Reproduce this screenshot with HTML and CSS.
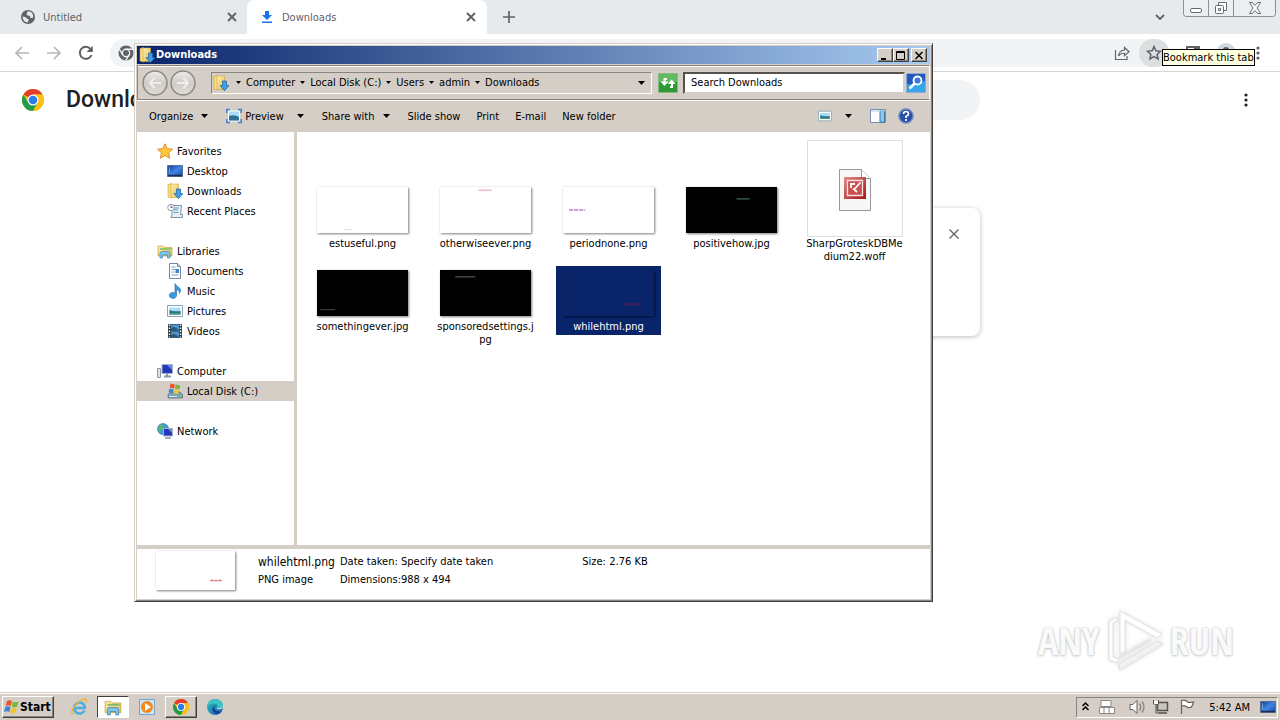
FILE: index.html
```html
<!DOCTYPE html>
<html lang="en">
<head>
<meta charset="utf-8">
<title>Downloads</title>
<link rel="stylesheet" href="styles.css">
</head>
<body>
<svg class="defs" aria-hidden="true">
  <defs>
    <linearGradient id="gFolder" x1="0" y1="0" x2="1" y2="1"><stop offset="0" stop-color="#fff3b0"/><stop offset="1" stop-color="#e3b94f"/></linearGradient>
    <linearGradient id="gScreen" x1="0" y1="0" x2="1" y2="1"><stop offset="0" stop-color="#12358f"/><stop offset=".5" stop-color="#3f86e0"/><stop offset="1" stop-color="#1a48a8"/></linearGradient>
    <linearGradient id="gDisc" x1="0" y1="0" x2="0" y2="1"><stop offset="0" stop-color="#eeece9"/><stop offset=".5" stop-color="#cfccc7"/><stop offset="1" stop-color="#e0ddd9"/></linearGradient>
    <linearGradient id="gEdge" x1="0" y1="0" x2="1" y2="1"><stop offset="0" stop-color="#35c1b5"/><stop offset="1" stop-color="#0b5cb8"/></linearGradient>
    <linearGradient id="gRed" x1="0" y1="0" x2="1" y2="1"><stop offset="0" stop-color="#e08a86"/><stop offset="1" stop-color="#a31616"/></linearGradient>
    <symbol id="chrome" viewBox="0 0 24 24">
      <circle cx="12" cy="12" r="12" fill="#fbc116"/>
      <path d="M12 12 1.600 6A12 12 0 0 1 22.400 6H12z" fill="#e33b2e"/>
      <path d="M1.600 6A12 12 0 0 0 12 24l5.200-9L12 12 6.800 15z" fill="#229a4b"/>
      <path d="M22.400 6A12 12 0 0 1 12 24l5.200-9A6 6 0 0 0 12 6z" fill="#fbc116"/>
      <circle cx="12" cy="12" r="6" fill="#fff"/><circle cx="12" cy="12" r="4.700" fill="#2b7de9"/>
    </symbol>
    <symbol id="dlfolder" viewBox="0 0 16 16">
      <path d="M1 1.500 4.500.5V15L1 14z" fill="#f5dc85" stroke="#c9a23d" stroke-width=".6"/>
      <path d="M4 1h7.500v13.500H4z" fill="url(#gFolder)" stroke="#d0a845" stroke-width=".6"/>
      <path d="M9.500 6h4v4.500h2.500L11.500 15.700 7 10.500h2.500z" fill="#3f9fe6" stroke="#1b62a5" stroke-width=".7"/>
    </symbol>
    <symbol id="lib" viewBox="0 0 16 16">
      <path d="M1 3h5l1.500 1.500H15V13H1z" fill="url(#gFolder)" stroke="#c9a23d" stroke-width=".7"/>
      <path d="M3 6h11" stroke="#79b86b" stroke-width="1.500"/>
      <path d="M3 15v-4.500q0-2 2-2h6q2 0 2 2V15h-2.500v-3h-5v3z" fill="#7cc6ea" stroke="#3b86b5" stroke-width=".7"/>
    </symbol>
    <symbol id="screen" viewBox="0 0 16 16"><path d="M.5 2.500h15v11H.5z" fill="url(#gScreen)" stroke="#5b6f93"/><path d="M1 12.500h14" stroke="#1e2e57" stroke-width="1.500"/><path d="M2 5h1M2 7h1M2 9h1" stroke="#b9dcff"/></symbol>
    <symbol id="pic" viewBox="0 0 16 16"><path d="M.5 2.500h15v11H.5z" fill="#fff" stroke="#8fa3b5"/><path d="M2.500 4.500h11v7h-11z" fill="#a8dcf5"/><path d="M2.500 7q4 2 11 1v3.500h-11z" fill="#2d7290"/><path d="M2.500 10h11v1.500h-11z" fill="#4f9b79"/></symbol>
    <symbol id="flag" viewBox="0 0 16 16">
      <path d="M3 2q2.500-1.500 5 0L6.800 7Q4.500 5.700 1.700 7z" fill="#e8562a"/><path d="M9 2.500q2.500 1.300 5.500 0l-1.300 5Q10.500 8.800 7.800 7.400z" fill="#79b83a"/>
      <path d="M1.400 8q2.800-1.300 5.100 0l-1.200 5Q3 11.700.1 13z" fill="#3b86d6"/><path d="M7.500 8.500q2.700 1.300 5.400 0l-1.300 5q-2.500 1.300-5.400-.1z" fill="#f5c32c"/>
    </symbol>
    <symbol id="x" viewBox="0 0 10 10"><path d="m1 1 8 8M9 1 1 9" stroke="currentColor" stroke-width="1.900" fill="none"/></symbol>
    <symbol id="caret" viewBox="0 0 7 4"><path d="M0 0h7L3.500 4z" fill="#000"/></symbol>
    <symbol id="dots" viewBox="0 0 4 14"><circle cx="2" cy="2" r="1.600"/><circle cx="2" cy="7" r="1.600"/><circle cx="2" cy="12" r="1.600"/></symbol>
  </defs>
</svg>

<div class="desktop">
  <main class="browser">
    <header class="tabstrip">
      <div class="tab">
        <svg class="i14" viewBox="0 0 14 14"><circle cx="7" cy="7" r="7" fill="#5f6368"/><path d="M1.500 6.500q3 0 4 1.500t2 1-1 3.500Q2 12 1.500 6.500zM6 1.500q1 1.500-.5 2.500 0 1.500 2 1.500T9.500 8q2 0 2.700-.5Q12.500 2.500 8.500 1.500z" fill="#e7eaed"/></svg>
        <span class="tab-title">Untitled</span>
        <button class="plain" aria-label="Close Untitled"><svg class="i10"><use href="#x"/></svg></button>
      </div>
      <div class="tab active">
        <svg class="i14" viewBox="0 0 14 14"><path d="M5 1h4v4h3L7 10 2 5h3zM2 11.500h10V13H2z" fill="#1a73e8"/></svg>
        <span class="tab-title">Downloads</span>
        <button class="plain" aria-label="Close Downloads"><svg class="i10"><use href="#x"/></svg></button>
      </div>
      <button class="plain newtab" aria-label="New tab"><svg class="i12" viewBox="0 0 12 12"><path d="M6 0v12M0 6h12" stroke="currentColor" stroke-width="1.700"/></svg></button>
      <span class="grow"></span>
      <button class="plain tabsearch" aria-label="Search tabs"><svg class="i10" viewBox="0 0 10 10"><path d="m1 3 4 4 4-4" fill="none" stroke="currentColor" stroke-width="1.900"/></svg></button>
      <div class="winctl">
        <button aria-label="Minimize"><svg viewBox="0 0 14 12"><rect x="1.500" y="6.500" width="11" height="4" rx="1.500" fill="#fff" stroke="#666b73"/></svg></button>
        <button aria-label="Restore"><svg viewBox="0 0 14 12"><path d="M4.500.5h8v8h-3M4.500.5v3" fill="#fff" stroke="#666b73"/><rect x="1.500" y="3.500" width="8" height="8" rx="1" fill="#fff" stroke="#666b73"/><path d="M4.500 6.500h2v2h-2z" fill="none" stroke="#666b73"/></svg></button>
        <button class="wide" aria-label="Close"><svg viewBox="0 0 14 12"><path d="M1.500.5h3L7 3.500 9.500.5h3L9 6l3.500 5.500h-3L7 8.500l-2.500 3h-3L5 6z" fill="#fff" stroke="#666b73"/></svg></button>
      </div>
    </header>
    <div class="toolbar">
      <button class="plain off" aria-label="Back"><svg class="i16" viewBox="0 0 16 16"><path d="M15 8H2M8 2 2 8l6 6" fill="none" stroke="currentColor" stroke-width="1.700"/></svg></button>
      <button class="plain off" aria-label="Forward"><svg class="i16" viewBox="0 0 16 16"><path d="M1 8h13M8 2l6 6-6 6" fill="none" stroke="currentColor" stroke-width="1.700"/></svg></button>
      <button class="plain" aria-label="Reload"><svg class="i16" viewBox="0 0 16 16"><path d="M13.500 10A6 6 0 1 1 12.500 4" fill="none" stroke="currentColor" stroke-width="2"/><path d="M14.800.8V7H8.600z" fill="currentColor"/></svg></button>
      <div class="omnibox">
        <svg class="i16" viewBox="0 0 16 16"><circle cx="8" cy="8" r="7.500" fill="#5f6368"/><circle cx="8" cy="8" r="3.700" fill="#5f6368" stroke="#f1f3f4" stroke-width="1.400"/><path d="M8 4.300h7M4.800 9.900 1.300 4M11.200 9.900 7.700 15.500" stroke="#f1f3f4" stroke-width="1.400"/></svg>
        <span class="grow"></span>
        <button class="plain" aria-label="Share"><svg class="i16" viewBox="0 0 16 16"><path d="M1.500 5v9.500h11.500V11M4.500 11q.5-5.500 6-6V2.500L15 6.700l-4.500 4V8.300Q6.500 8 4.500 11z" fill="none" stroke="currentColor" stroke-width="1.200"/></svg></button>
        <button class="plain star" aria-label="Bookmark this tab"><svg class="i16" viewBox="0 0 16 16"><path d="m8 1.500 1.900 4.300 4.700.5-3.500 3.100 1 4.600L8 11.600 3.900 14l1-4.600L1.400 6.300l4.700-.5z" fill="none" stroke="currentColor" stroke-width="1.500"/></svg></button>
      </div>
      <button class="plain" aria-label="Side panel"><svg class="i14" viewBox="0 0 14 14"><path d="M1 1h12v11H1z" fill="none" stroke="currentColor" stroke-width="2"/><path d="M8 1h5v11H8z" fill="currentColor"/></svg></button>
      <button class="plain avatar" aria-label="Profile"><svg class="i14" viewBox="0 0 14 14"><circle cx="7" cy="4" r="3" fill="#5f6368"/><path d="M1 13q0-5 6-5t6 5z" fill="#5f6368"/></svg></button>
      <button class="plain menu" aria-label="Menu"><svg class="dots"><use href="#dots"/></svg></button>
    </div>
    <section class="page">
      <div class="page-head">
        <svg class="i22"><use href="#chrome"/></svg>
        <h1>Downloads</h1>
        <div class="page-search"></div>
        <button class="plain dark" aria-label="More actions"><svg class="dots"><use href="#dots"/></svg></button>
      </div>
      <article class="card"><button class="plain" aria-label="Remove from list"><svg class="i10" viewBox="0 0 10 10"><path d="m.5.5 9 9M9.500.5l-9 9" stroke="currentColor" stroke-width="1.300"/></svg></button></article>
    </section>
  </main>

  <footer class="taskbar">
    <button class="start raised"><svg class="i18"><use href="#flag"/></svg>Start</button>
    <div class="quick">
      <button class="task" aria-label="Internet Explorer"><svg class="i18" viewBox="0 0 18 18"><path d="M14.500 12.500a5.500 5.500 0 1 1 .2-4.500v2H5" fill="none" stroke="#49aee6" stroke-width="2.600"/><path d="M3 16q-3-1 1-7 5-7 10-8 4 0 2 4" fill="none" stroke="#e8b93b" stroke-width="1.400"/></svg></button>
      <button class="task pressed" aria-label="Explorer"><svg class="i18"><use href="#lib"/></svg></button>
      <button class="task" aria-label="Media Player"><svg class="i18" viewBox="0 0 18 18"><path d="M1.500 1.500h15v15h-15z" fill="#cde7f8" stroke="#6fa5cf"/><circle cx="9" cy="9" r="6" fill="#f28a1d"/><path d="m7 5 6 4-6 4z" fill="#fff"/></svg></button>
      <button class="task raised" aria-label="Chrome"><svg class="i16"><use href="#chrome"/></svg></button>
      <button class="task" aria-label="Edge"><svg class="i16" viewBox="0 0 16 16"><circle cx="8" cy="8" r="8" fill="url(#gEdge)"/><path d="M0 7.500Q1 .5 8 0q7.500.5 8 6.500 0 4-5.500 3.500Q12 5 7 4.500 2 4.500 0 7.500z" fill="#3cc4c4"/><path d="M8.500 7q-2 .5-1 3 1.500 3 5.500 2.500l2-.5q-2 3-5.500 3Q4.500 13.500 5.500 9 6.500 6.500 8.500 7z" fill="#1b3f93"/><path d="M9 7q1.500 1 .8 3l3 .3q3-.5 3.200-3L14 9l-3.300 0z" fill="#d4cec6"/></svg></button>
    </div>
    <span class="grow"></span>
    <div class="tray">
      <svg class="i9" viewBox="0 0 9 12"><path d="m1.500 5 3-3 3 3M1.500 9l3-3 3 3" fill="none" stroke="#000" stroke-width="1.500"/></svg>
      <svg class="i18" viewBox="0 0 18 18"><path d="M3 2.500h10v6H3zM1.500 9.500h15v6h-15zM6 9v6M11 9v6" fill="#fff" stroke="#8b8782"/></svg>
      <svg class="i18 sound" viewBox="0 0 18 18"><path d="M2 6.500h3l4-4v13l-4-4H2z" fill="#fff" stroke="#67635f"/><path d="M11.500 5.500q2.500 3.500 0 7M14 3.500q4 5.500 0 11" fill="none" stroke="#85817c" stroke-width="1.300"/></svg>
      <svg class="i18" viewBox="0 0 18 18"><path d="M5.500 4.500h10v8h-10z" fill="#c9c5bf" stroke="#55514d" stroke-width="1.500"/><path d="M7 15h8" stroke="#55514d" stroke-width="1.500"/><path d="M1.500 2v4h5V2M4 6v9h4" fill="none" stroke="#55514d"/><path d="M2 3h4v3H2z" fill="#fff"/></svg>
      <svg class="i18" viewBox="0 0 18 18"><path d="M3.500 16V2.500q4-1 6 1.500 2.500 1 6 0-1 4-2.500 5.500-3 .5-5-1-2-1.500-4-.5" fill="#fff" stroke="#67635f" stroke-width="1.200"/></svg>
      <time>5:42 AM</time>
      <svg class="i16"><use href="#screen"/></svg>
    </div>
  </footer>

  <section class="window" aria-label="Downloads folder">
    <div class="titlebar">
      <svg class="i16"><use href="#dlfolder"/></svg>
      <h2>Downloads</h2>
      <button class="cap" aria-label="Minimize"><svg viewBox="0 0 10 9"><path d="M1 8h5" stroke="#000" stroke-width="2"/></svg></button>
      <button class="cap" aria-label="Maximize"><svg viewBox="0 0 10 9"><path d="M.5.5h8v8h-8zM0 1.500h9" fill="none" stroke="#000"/></svg></button>
      <button class="cap close" aria-label="Close"><svg viewBox="0 0 10 9"><path d="m1.500 1 7 7M8.500 1l-7 7" stroke="#000" stroke-width="1.500"/></svg></button>
    </div>
    <div class="addr">
      <button class="plain" aria-label="Back"><svg class="i26" viewBox="0 0 26 26"><circle cx="13" cy="13" r="12" fill="url(#gDisc)" stroke="#8b8884" stroke-width="1.500"/><path d="M19 13H8M12.500 8 8 13l4.500 5" fill="none" stroke="#f1efec" stroke-width="2"/></svg></button>
      <button class="plain" aria-label="Forward"><svg class="i26" viewBox="0 0 26 26"><circle cx="13" cy="13" r="12" fill="url(#gDisc)" stroke="#8b8884" stroke-width="1.500"/><path d="M7 13h11M13.500 8l4.500 5-4.500 5" fill="none" stroke="#f1efec" stroke-width="2"/></svg></button>
      <nav class="crumbs" aria-label="Address">
        <svg class="i16"><use href="#dlfolder"/></svg>
        <svg class="caret s"><use href="#caret"/></svg><button class="plain">Computer</button>
        <svg class="caret s"><use href="#caret"/></svg><button class="plain">Local Disk (C:)</button>
        <svg class="caret s"><use href="#caret"/></svg><button class="plain">Users</button>
        <svg class="caret s"><use href="#caret"/></svg><button class="plain">admin</button>
        <svg class="caret s"><use href="#caret"/></svg><button class="plain">Downloads</button>
        <span class="grow"></span>
        <button class="plain" aria-label="History"><svg class="caret"><use href="#caret"/></svg></button>
      </nav>
      <button class="plain refresh" aria-label="Refresh"><svg class="i20" viewBox="0 0 20 20"><rect x=".5" y=".5" width="19" height="19" fill="#2f9a35" stroke="#86b986"/><path d="M1 1h18v8H1z" fill="#62b95f"/><path d="M9 6H6.500v3M12 14h2v-4" fill="none" stroke="#fff" stroke-width="2"/><path d="M2.500 8.500h8l-4 4.500zM9.500 11h8L13.700 6.500z" fill="#fff"/></svg></button>
      <input class="search" type="text" aria-label="Search Downloads" value="Search Downloads">
      <button class="plain" aria-label="Search"><svg class="i20" viewBox="0 0 20 20"><rect x=".5" y=".5" width="19" height="19" rx="1" fill="#2459bd" stroke="#8ea9d2"/><path d="M1 11q9 1 18-3v11H1z" fill="#37a5e8"/><circle cx="11.500" cy="7.500" r="4" fill="#3f7bd6" stroke="#fff" stroke-width="1.800"/><path d="m8.500 10.500-5 5" stroke="#fff" stroke-width="2.500"/></svg></button>
    </div>
    <div class="commands">
      <button class="plain">Organize<svg class="caret"><use href="#caret"/></svg></button>
      <button class="plain"><svg class="i16" viewBox="0 0 16 16"><path d="M2.500 3h11v10h-11z" fill="#a8dcf5" stroke="#fff"/><path d="M3 8q5-2 10 1v3.500H3z" fill="#2d7290"/><path d="M.8 5V1.500H4M12 1.500h3.200V5M15.200 11v3.500H12M4 14.500H.8V11" fill="none" stroke="#4a7fd0" stroke-width="1.500"/></svg><span>Preview</span><svg class="caret far"><use href="#caret"/></svg></button>
      <button class="plain">Share with<svg class="caret"><use href="#caret"/></svg></button>
      <button class="plain">Slide show</button>
      <button class="plain">Print</button>
      <button class="plain">E-mail</button>
      <button class="plain">New folder</button>
      <span class="grow"></span>
      <button class="plain" aria-label="Change view"><svg class="i14"><use href="#pic"/></svg><svg class="caret far"><use href="#caret"/></svg></button>
      <button class="plain pane" aria-label="Preview pane"><svg class="i16" viewBox="0 0 16 16"><path d="M.5 1.500h15v13H.5z" fill="#fff" stroke="#6f8fb5"/><path d="M10 3h4.500v11H10z" fill="#8cc9e8" stroke="#3e7ba6"/><path d="M1 3h14" stroke="#b8cde5"/></svg></button>
      <button class="plain" aria-label="Help"><svg class="i16" viewBox="0 0 16 16"><circle cx="8" cy="8" r="7.200" fill="#2a4ea8" stroke="#8296c4" stroke-width="1.500"/><path d="M5.500 6q0-2.500 2.500-2.500T10.500 6Q10.500 7.300 8 8.500V10M8 11v2" fill="none" stroke="#fff" stroke-width="1.700"/></svg></button>
    </div>
    <div class="body">
      <nav class="tree" aria-label="Folders">
        <ul>
          <li><a href="#"><svg class="i16" viewBox="0 0 16 16"><path d="m8 .8 2.200 4.900 5.300.5-4 3.600 1.200 5.400L8 12.400l-4.700 2.800 1.200-5.400-4-3.600 5.300-.5z" fill="#ffc93c" stroke="#e08a2c"/></svg>Favorites</a></li>
          <li class="sub"><a href="#"><svg class="i16"><use href="#screen"/></svg>Desktop</a></li>
          <li class="sub"><a href="#"><svg class="i16"><use href="#dlfolder"/></svg>Downloads</a></li>
          <li class="sub"><a href="#"><svg class="i16" viewBox="0 0 16 16"><path d="M5 2.500h9.500l-1 9h2v3H4l1-3z" fill="#e9f0f5" stroke="#7d93a6"/><path d="M7 5h5M7 7h4M6.500 9.500h5" stroke="#4f9fd1"/><circle cx="4" cy="4.500" r="3.300" fill="#fff" stroke="#8a98a5"/><path d="M4 2.500v2h1.500" fill="none" stroke="#556"/></svg>Recent Places</a></li>
        </ul>
        <ul>
          <li><a href="#"><svg class="i16"><use href="#lib"/></svg>Libraries</a></li>
          <li class="sub"><a href="#"><svg class="i16" viewBox="0 0 16 16"><path d="M2.500.5h8l3 3v12h-11z" fill="#fff" stroke="#7088a3"/><path d="M10.500.5v3h3" fill="#cfe0ef" stroke="#7088a3"/><path d="M4.500 4h4M4.500 6.500h4M4.500 9h3M4.500 12h7" stroke="#7aa0c4"/><path d="M8.500 6h3.500v4H8.500z" fill="#3b84c9"/></svg>Documents</a></li>
          <li class="sub"><a href="#"><svg class="i16" viewBox="0 0 16 16"><path d="M8 .5q1 2 4 4t.5 6q.5-3-3-4v6a3.600 3 0 1 1-1.500-2.500z" fill="#3a9be0" stroke="#1d6cb0" stroke-width=".6"/></svg>Music</a></li>
          <li class="sub"><a href="#"><svg class="i16"><use href="#pic"/></svg>Pictures</a></li>
          <li class="sub"><a href="#"><svg class="i16" viewBox="0 0 16 16"><path d="M1 1h14v14H1z" fill="#2c3a45"/><path d="M4 1.500h8v6H4zM4 8.500h8v6H4z" fill="#4c93cc"/><path d="M4 5q4-3 8 2.500H4zM4 12q4-3 8 2.500H4z" fill="#2a5876"/><path d="M2.500 1.500v13M13.500 1.500v13" stroke="#fff" stroke-width="1.400" stroke-dasharray="1.500 1.500"/></svg>Videos</a></li>
        </ul>
        <ul>
          <li><a href="#"><svg class="i16" viewBox="0 0 16 16"><path d="M5 1.500h10.500v9H5z" fill="#2536b8" stroke="#a5b0c8"/><path d="M10 2h5v5z" fill="#6b86e8"/><path d="M7 13.500h7M10 11v2" stroke="#8d99ab" stroke-width="2"/><path d="M.5 5.500h3v9h-3z" fill="#dfe4ea" stroke="#8d99ab"/></svg>Computer</a></li>
          <li class="sub here"><a href="#"><svg class="i16" viewBox="0 0 16 16"><path d="M1 11.500 4 9h9l2.500 2.500v3.500H1z" fill="#7ba6b8" stroke="#47697a" stroke-width=".7"/><path d="M2 13.500h8" stroke="#d3edf2"/><path d="M12 13.500h2" stroke="#6ddc4c" stroke-width="1.500"/><path d="m3.500.5 4.500 1-1 4-4.200-.8z" fill="#e8562a"/><path d="m8.800 1.500 4.500.7-1 4.200-4.500-.7z" fill="#79b83a"/><path d="m2.500 5.600 4.200.8-1 3.700-4.200-.8z" fill="#3b86d6"/><path d="m7.500 6.600 4.500.8-1 3.600-4.500-.7z" fill="#f5c32c"/></svg>Local Disk (C:)</a></li>
        </ul>
        <ul>
          <li><a href="#"><svg class="i16" viewBox="0 0 16 16"><circle cx="6" cy="6" r="5.500" fill="#3a9bd9" stroke="#28639c" stroke-width=".6"/><path d="M2 3q3-3 5 0L5 6 3 9Q0 6 2 3z" fill="#5cb86a"/><path d="M6.500 5.500h9v7.500h-9z" fill="#2536b8" stroke="#a5b0c8"/><path d="M11 6h4v4z" fill="#6b86e8"/><path d="M8 15h6" stroke="#8d99ab" stroke-width="1.500"/></svg>Network</a></li>
        </ul>
      </nav>
      <div class="files">
        <button class="file"><svg class="thumb" viewBox="0 0 90 45"><path d="M27 42h8" stroke="#ddd"/></svg><span>estuseful.png</span></button>
        <button class="file"><svg class="thumb" viewBox="0 0 90 45"><path d="M38 3h13" stroke="#efbcc1" stroke-width="1.500"/></svg><span>otherwiseever.png</span></button>
        <button class="file"><svg class="thumb" viewBox="0 0 90 45"><path d="M6 22.500h16" stroke="#d09be0" stroke-width="2" stroke-dasharray="4 1"/></svg><span>periodnone.png</span></button>
        <button class="file"><svg class="thumb black" viewBox="0 0 90 45"><path d="M50 11.500h13" stroke="#34594c" stroke-width="1.500"/></svg><span>positivehow.jpg</span></button>
        <button class="file"><span class="frame"><svg viewBox="0 0 34 44"><path d="M1.500 1.500h22l9 9v32h-31z" fill="#f7f7f7" stroke="#999"/><path d="M23.500 1.500v9h9" fill="#fff" stroke="#999"/><path d="M6 9h22v22H6z" fill="url(#gRed)"/><path d="M9.500 12.500h15v15h-15z" fill="#c9514e" stroke="#f6e3e2" stroke-width="1.300"/><path d="M13 15v5M12 16h5M22.500 14.500l-6 6.500M15 20.500l4 3.500" stroke="#fff" stroke-width="1.800"/></svg></span><span>SharpGroteskDBMe<wbr>dium22.woff</span></button>
        <button class="file"><svg class="thumb black" viewBox="0 0 90 45"><path d="M3 39h15" stroke="#444"/></svg><span>somethingever.jpg</span></button>
        <button class="file"><svg class="thumb black" viewBox="0 0 90 45"><path d="M15 6.500h20" stroke="#444" stroke-width="1.500"/></svg><span>sponsoredsettings.j<wbr>pg</span></button>
        <button class="file selected"><svg class="thumb" viewBox="0 0 90 45"><path d="M61 33.500h16" stroke="#35205f" stroke-width="3"/></svg><span>whilehtml.png</span></button>
      </div>
    </div>
    <div class="details">
      <svg class="thumb small" viewBox="0 0 78 39"><path d="M54 29.500h12" stroke="#e06a70" stroke-width="1.500" stroke-dasharray="3 1"/></svg>
      <div class="col name"><strong>whilehtml.png</strong><span>PNG image</span></div>
      <dl class="col"><dt>Date taken:</dt><dd>Specify date taken</dd><dt>Dimensions:</dt><dd>988 x 494</dd></dl>
      <dl class="col size"><dt>Size:</dt><dd>2.76 KB</dd></dl>
    </div>
  </section>

  <div class="tooltip" role="tooltip">Bookmark this tab</div>
  <div class="mark"><span>ANY</span><svg viewBox="0 0 60 64"><path d="M12 13V9L4 13v39l9 3v-4l-5-2V15z" fill="#fff" stroke="#e0e0e0"/><path d="M15 46V3l42 23-5 4-32-18v31z" fill="#fff" stroke="#e0e0e0"/><path d="M14 56l38-23 6 3-43 26z" fill="#f1f1f1" stroke="#e0e0e0"/><path d="M14 50l32-19" stroke="#e6e6e6" stroke-width="3"/></svg><span>RUN</span></div>
</div>
</body>
</html>
```
FILE: styles.css
```css
* { box-sizing: border-box; }
body { margin: 0; font: 11px/13px "DejaVu Sans Condensed", Roboto, sans-serif; color: #000; }
h1, h2, ul, dl, dd { margin: 0; padding: 0; }
ul { list-style: none; }
svg { flex: none; display: block; }
button, input { font: inherit; color: inherit; }
.defs { position: absolute; width: 0; height: 0; }
.grow { flex: 1; }
.plain { display: flex; align-items: center; padding: 0; border: 0; background: none; white-space: nowrap; }
.i9 { width: 9px; height: 12px; }
.i10 { width: 10px; height: 10px; }
.i12 { width: 12px; height: 12px; }
.i14 { width: 14px; height: 14px; }
.i16 { width: 16px; height: 16px; }
.i18 { width: 18px; height: 18px; }
.i20 { width: 20px; height: 20px; }
.i22 { width: 22px; height: 22px; }
.i26 { width: 26px; height: 26px; }
.dots { width: 4px; height: 14px; fill: currentColor; }
.caret { width: 7px; height: 4px; }
.caret.s { width: 5px; height: 3px; }

.desktop { position: relative; display: flex; flex-direction: column; min-height: 100vh; overflow: hidden; background: #fff; }
.browser { flex: 1; color: #5f6368; }
.tabstrip { display: flex; height: 34px; background: #e7eaed; }
.tab { display: flex; align-items: center; width: 247px; padding: 0 10px 0 21px; }
.tab.active { width: 240px; padding: 0 11px 0 13px; background: #fff; border-radius: 8px 8px 0 0; }
.tab-title { flex: 1; margin-left: 8px; }
.newtab { margin-left: 16px; }
.tabsearch { margin-right: 18px; }
.winctl { display: flex; height: 17px; margin-right: 4px; border: 1px solid #8c9197; border-top: 0; border-radius: 0 0 4px 4px; overflow: hidden; }
.winctl button { display: flex; justify-content: center; width: 25px; padding: 2px 0 0; border: 0; border-right: 1px solid #8c9197; background: #eceef0; }
.winctl .wide { width: 41px; border-right: 0; }
.winctl svg { width: 14px; height: 12px; }
.toolbar { display: flex; align-items: center; gap: 16px; height: 38px; padding: 0 20px 0 14px; border-bottom: 1px solid #d5d5d5; }
.toolbar .off { color: #b5b7ba; }
.toolbar .menu { margin-left: 4px; }
.omnibox { display: flex; flex: 1; align-items: center; height: 28px; padding: 0 1px 0 8px; border-radius: 14px; background: #f1f3f4; }
.star { justify-content: center; width: 30px; height: 28px; margin-left: 9px; border-radius: 14px; background: #dcdee0; }
.avatar { justify-content: center; width: 20px; height: 20px; border-radius: 10px; background: #d3d8e2; }
.page-head { display: flex; align-items: center; height: 56px; padding: 0 32px 0 22px; }
.page-head h1 { width: 68px; margin-left: 22px; overflow: hidden; font: 500 23px/28px Roboto, sans-serif; color: #202124; }
.page-search { flex: 1; height: 40px; margin: 0 264px 0 188px; border-radius: 20px; background: #f1f3f4; }
.dark { color: #202124; }
.card { display: flex; justify-content: flex-end; align-items: flex-start; height: 128px; margin: 80px 300px 0; padding: 21px; border-radius: 8px; background: #fff; box-shadow: 0 1px 5px #bbb; }

.raised { background: #d4cec6; border: 1px solid; border-color: #fff #404040 #404040 #fff; box-shadow: inset -1px -1px #88847f; }
.taskbar { display: flex; align-items: center; height: 27px; padding: 0 2px; background: #d4cec6; border-top: 1px solid #fff; box-shadow: 0 -1px #d4cec6; }
.start { display: flex; align-items: center; width: 52px; height: 22px; padding: 0 1px; font: bold 12px/14px "DejaVu Sans Condensed", sans-serif; }
.start svg { width: 16px; height: 16px; }
.quick { display: flex; gap: 2px; margin-left: 9px; }
.task { display: flex; align-items: center; justify-content: center; width: 32px; height: 22px; padding: 0; }
.task:not(.raised):not(.pressed) { border: 0; background: none; }
.pressed { background: #fff; border: 1px solid; border-color: #404040 #fff #fff #404040; }
.tray { display: flex; align-items: center; gap: 8px; height: 21px; padding: 0 1px 0 4px; border: 1px solid; border-color: #88847f #fff #fff #88847f; }
.sound { margin-left: 4px; margin-right: -2px; }
.tray time { margin: 0 2px 0 5px; }

.window { position: absolute; left: 134px; top: 43px; width: 799px; display: flex; flex-direction: column; height: 559px; padding: 2px; background: #d4cec6; border: 1px solid; border-color: #d4cec6 #404040 #404040 #d4cec6; box-shadow: inset 1px 1px #fff, inset -1px -1px #88847f; }
.titlebar { display: flex; align-items: center; height: 18px; padding: 0 3px 0 2px; background: linear-gradient(90deg, #0a246a, #a6caf0); color: #fff; }
.titlebar h2 { flex: 1; margin-left: 1px; font-size: 11px; line-height: 14px; }
.cap { width: 16px; height: 14px; padding: 1px 2px; background: #d4cec6; border: 1px solid; border-color: #fff #404040 #404040 #fff; box-shadow: inset -1px -1px #88847f; }
.cap svg { width: 10px; height: 9px; }
.cap.close { margin-left: 2px; }
.addr { display: flex; align-items: center; height: 35px; margin-top: 1px; padding: 0 3px 0 4px; border: 1px solid; border-color: #88847f #fff #88847f #88847f; box-shadow: inset 0 1px #fff, 0 1px #fff; }
.addr > .plain + .plain { margin-left: 2px; }
.crumbs { display: flex; flex: 1; align-items: center; gap: 5px; height: 22px; margin-left: 15px; padding: 0 6px 0 1px; border: 1px solid; border-color: #88847f #fff #fff #88847f; }
.crumbs .i16 { margin-right: 2px; }
.refresh { margin: 0 5px 0 6px; }
.search { width: 222px; height: 22px; margin-right: 1px; padding: 0 6px; background: #fff; border: 2px solid; border-color: #55514d #d4cec6 #d4cec6 #55514d; }
.commands { display: flex; align-items: center; gap: 16px; height: 32px; padding: 0 16px 0 12px; }
.commands .caret { margin: 0 2px 0 8px; }
.commands .caret.far { margin-left: 13px; }
.commands .plain span { margin-left: 3px; }
.pane { margin-right: -4px; }
.body { display: flex; flex: 1; min-height: 0; background: #fff; }
.tree { display: flex; flex-direction: column; gap: 20px; width: 160px; padding-top: 9px; border-right: 3px solid #d4cec6; }
.tree a { display: flex; align-items: center; gap: 4px; height: 20px; padding-left: 20px; color: #000; text-decoration: none; }
.tree .sub a { padding-left: 30px; }
.tree .here { background: #d4cec6; }
.files { display: grid; flex: 1; grid-template-columns: repeat(auto-fill, 105px); align-content: start; column-gap: 18px; row-gap: 1px; padding: 6px 10px 0 13px; }
.file { display: flex; flex-direction: column; align-items: center; padding: 2px 0; border: 0; background: none; align-self: start; }
.file:nth-child(-n+4) { padding-top: 47px; }
.file > span { white-space: nowrap; max-width: 105px; }
.file > span:last-child { white-space: normal; margin-top: 2px; }
.thumb { width: 91px; height: 46px; margin: 2px 0; background: #fff; box-shadow: 0 0 1px #ccc, 1px 1px 2px #777; }
.thumb.black { background: #000; }
.frame { display: flex; align-items: center; justify-content: center; width: 96px; height: 97px; border: 1px solid #d8dfe5; padding-top: 3px; }
.file .frame + span { margin-top: 0; }
.frame svg { width: 34px; height: 44px; }
.file.selected { background: #0a246a; color: #fff; }
.selected .thumb { background: #0a246a; box-shadow: 1px 1px 2px #020e33; }
.details { display: flex; align-items: flex-start; height: 54px; padding: 2px 0 0 19px; border-top: 4px solid #d4cec6; background: #fff; }
.thumb.small { width: 79px; height: 39px; margin: 0; }
.col { padding-top: 2px; line-height: 18px; }
.col.name { display: flex; flex-direction: column; width: 82px; margin-left: 23px; white-space: nowrap; }
.name strong { font-size: 12px; font-weight: normal; }
dl.col { display: grid; grid-template-columns: 61px auto; align-content: start; }
dl.size { grid-template-columns: 27px auto; margin-left: 89px; }

.tooltip { position: absolute; left: 1162px; top: 49px; padding: 1px 0; border: 1px solid #000; background: #ffffe1; white-space: nowrap; }
.mark { position: absolute; right: 46px; bottom: 48px; display: flex; align-items: center; gap: 5px; font: 38px/44px "Liberation Sans Narrow", "Open Sans Condensed", sans-serif; color: #fafafa; text-shadow: 0 0 2px #bbb, 0 1px 3px #ccc; }
.mark svg { width: 60px; height: 64px; filter: drop-shadow(0 0 2px #ddd); }
```
